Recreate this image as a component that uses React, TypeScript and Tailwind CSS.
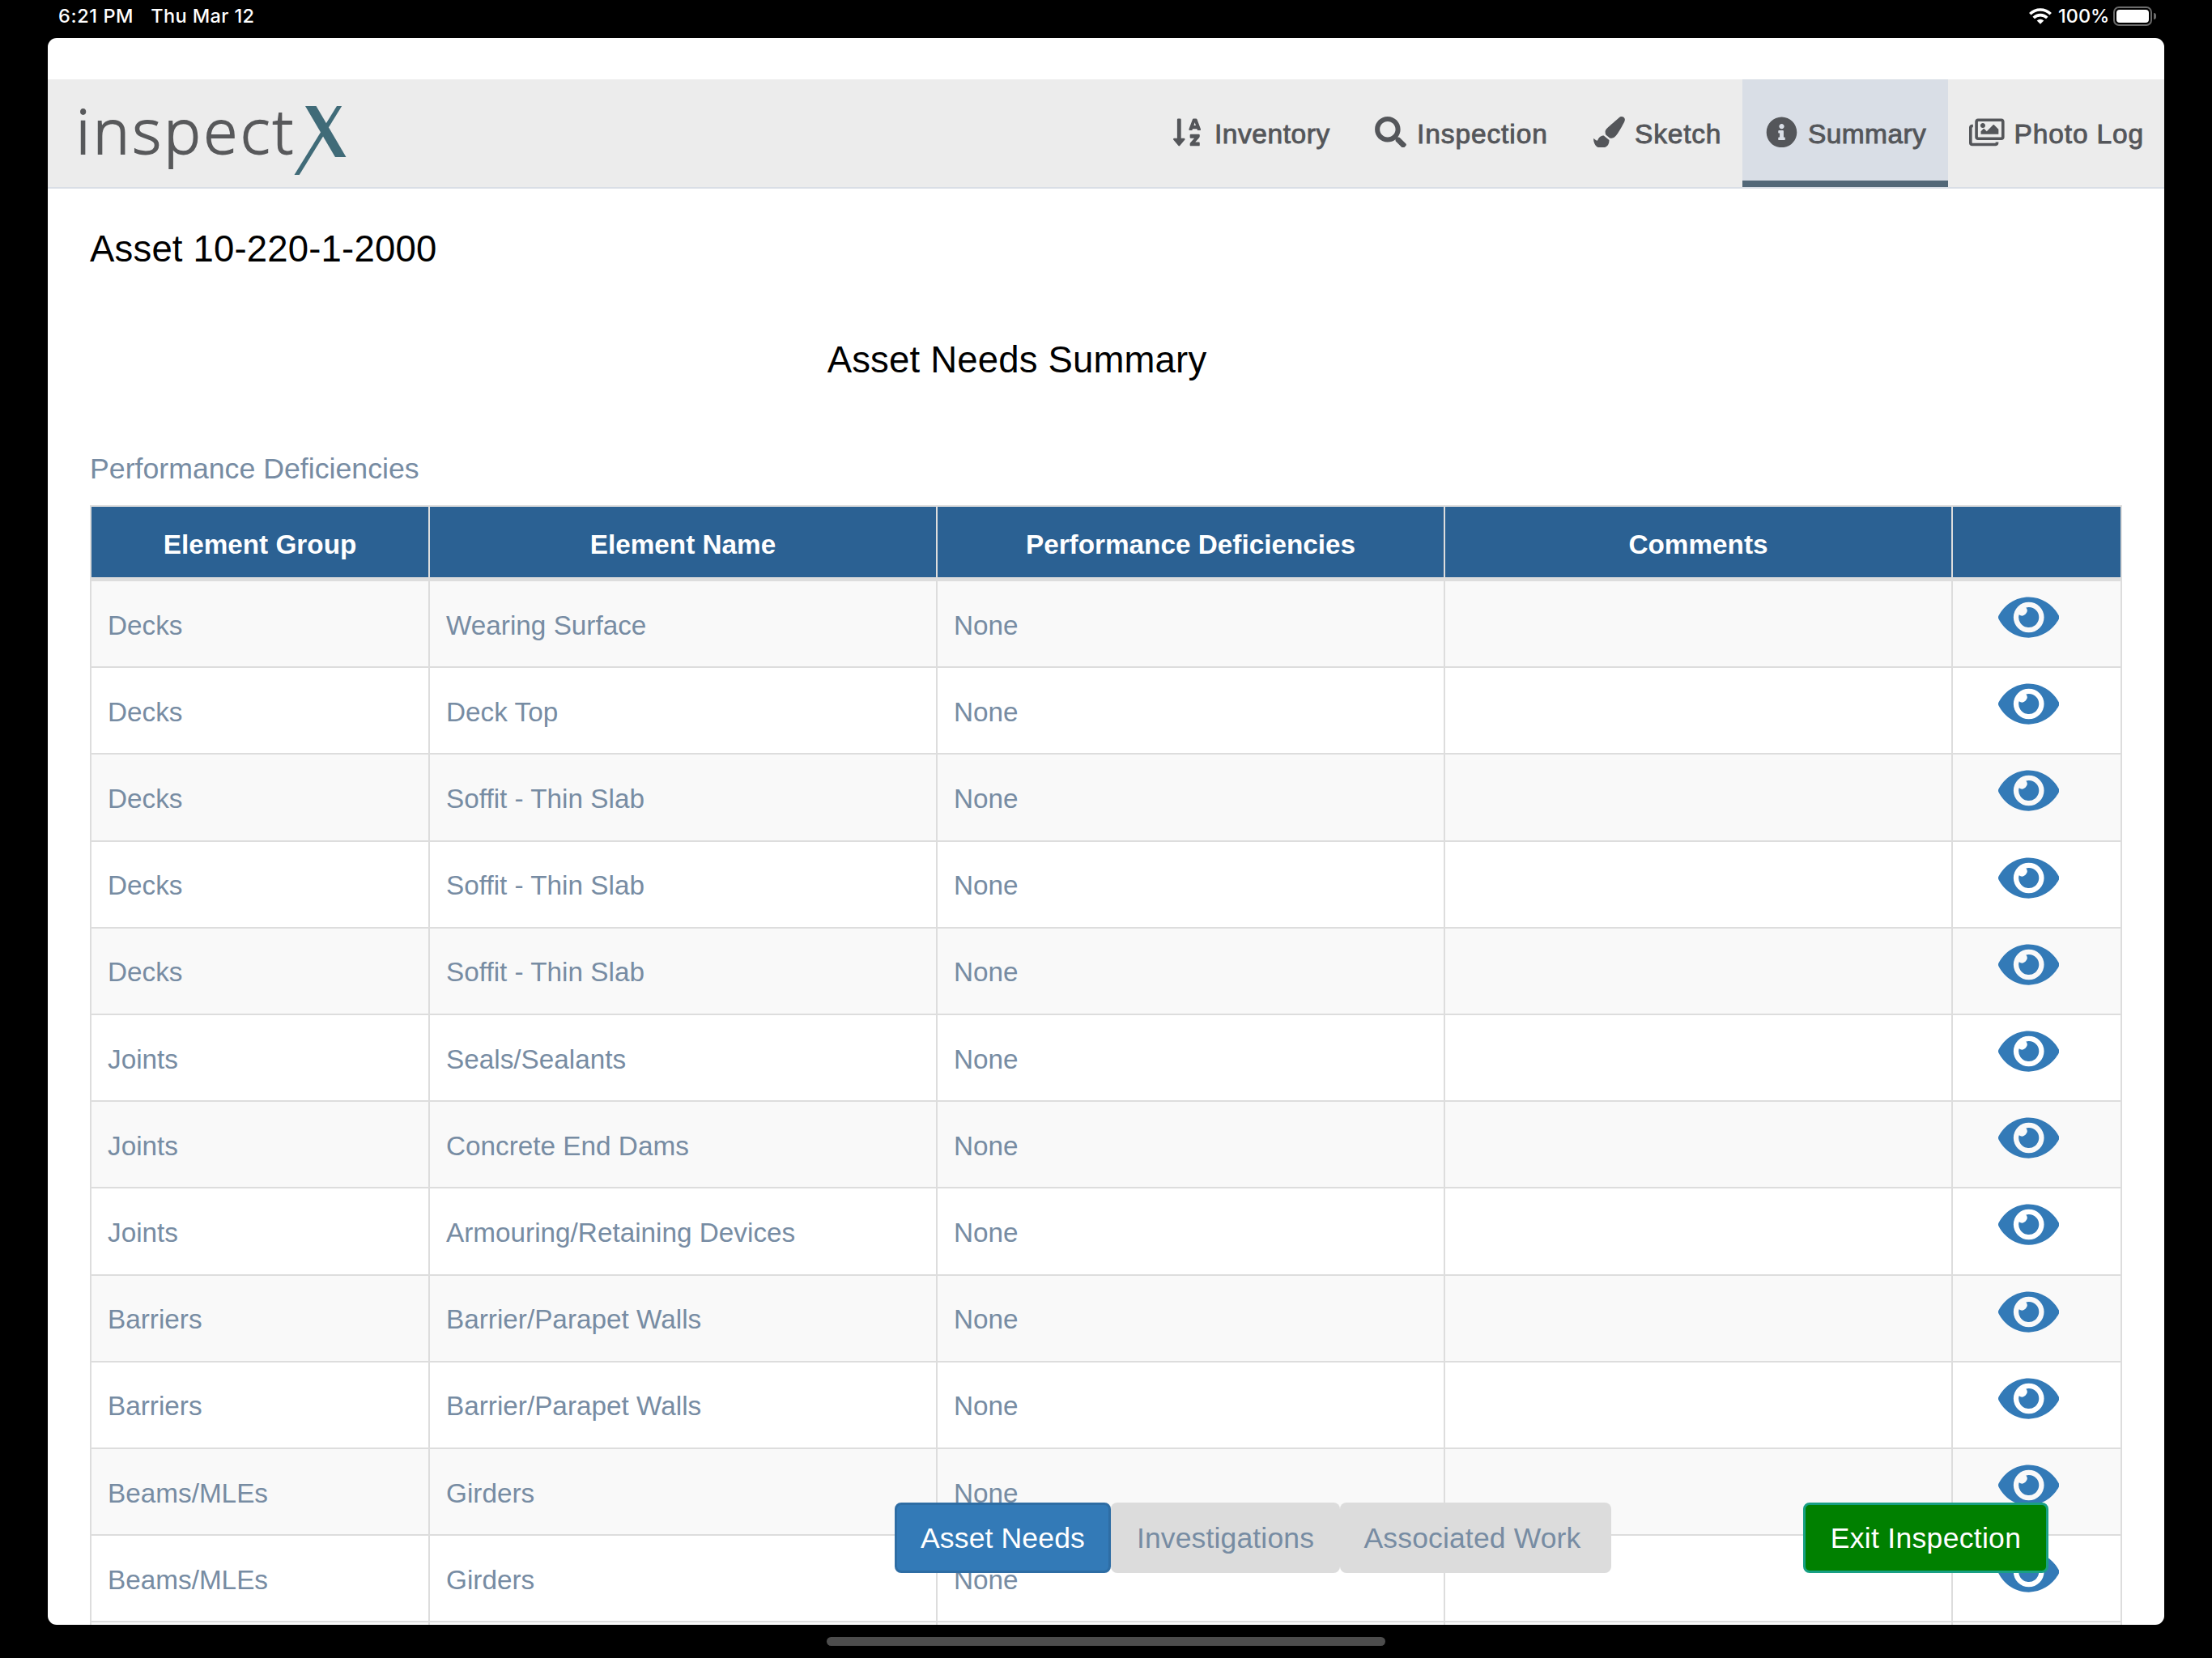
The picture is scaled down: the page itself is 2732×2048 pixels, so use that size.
import { FaEye, FaInfoCircle, FaPaintBrush, FaRegImages, FaSearch, FaSortAlphaDown } from "react-icons/fa";

const navItems = [
  { label: "Inventory", icon: FaSortAlphaDown, size: "w-[34px]", box: "w-[250px] pl-[30px]", gap: "ml-[17px]", text: "tracking-[0.55px]" },
  { label: "Inspection", icon: FaSearch, size: "w-[39px]", box: "w-[299px] pl-[29px]", gap: "ml-[13px]", text: "tracking-[0.9px]" },
  { label: "Sketch", icon: FaPaintBrush, size: "w-[39px]", box: "w-[184px] pl-0", gap: "ml-[12px]", text: "tracking-[0.8px]" },
  { label: "Summary", icon: FaInfoCircle, size: "w-[39px]", box: "w-[254px] pl-[29px]", gap: "ml-[13px]", text: "tracking-[0.4px]", active: true },
  { label: "Photo Log", icon: FaRegImages, size: "w-[43.6px]", box: "w-[267px] pl-[26px]", gap: "ml-[12px]", text: "tracking-[0.85px]" },
];

const headers = ["Element Group", "Element Name", "Performance Deficiencies", "Comments", ""];

const rows = [
  ["Decks", "Wearing Surface"],
  ["Decks", "Deck Top"],
  ["Decks", "Soffit - Thin Slab"],
  ["Decks", "Soffit - Thin Slab"],
  ["Decks", "Soffit - Thin Slab"],
  ["Joints", "Seals/Sealants"],
  ["Joints", "Concrete End Dams"],
  ["Joints", "Armouring/Retaining Devices"],
  ["Barriers", "Barrier/Parapet Walls"],
  ["Barriers", "Barrier/Parapet Walls"],
  ["Beams/MLEs", "Girders"],
  ["Beams/MLEs", "Girders"],
];

const StatusBar = () => (
  <div className="h-[47px] shrink-0 flex justify-between pl-[72px] pr-[69px] text-white font-['Inter',sans-serif] font-medium text-[23.5px] leading-[40px]">
    <div className="flex gap-[21px]">
      <span className="tracking-[0.6px]">6:21 PM</span>
      <span className="tracking-[0.4px]">Thu Mar 12</span>
    </div>
    <div className="flex items-center h-[40px]">
      <svg width="28" height="20" viewBox="0 0 28 20" fill="none" stroke="white" strokeWidth="3.6">
        <path d="M1.3 7.2a18 18 0 0 1 25.4 0" />
        <path d="M5.7 12a11.8 11.8 0 0 1 16.6 0" />
        <path d="M14 19.8l-4.3-4.4a6.2 6.2 0 0 1 8.6 0z" fill="white" stroke="none" />
      </svg>
      <span className="ml-[8px] w-[64px]">100%</span>
      <div className="ml-[4px] w-[48px] h-[24px] rounded-[7px] border-2 border-[#6b6b6b] p-[2px]">
        <div className="h-full rounded-[4px] bg-white" />
      </div>
      <div className="ml-[2px] w-[3px] h-[8px] rounded-r-full bg-[#6b6b6b]" />
    </div>
  </div>
);

const Logo = () => (
  <div className="flex pl-[35px]">
    <span className="w-[266px] text-[76px] leading-[125px] font-light tracking-[3.7px] text-[#58595b] [-webkit-text-stroke:1.8px_#58595b] font-['Open_Sans','Noto_Sans',sans-serif]">
      inspect
    </span>
    <svg className="mt-[33px]" width="68" height="86" viewBox="0 0 68 86" fill="#406b78">
      <rect x="17" y="0" width="13.5" height="63" transform="skewX(30.4)" />
      <rect x="56" y="0" width="6.2" height="85" transform="skewX(-31.7)" />
    </svg>
  </div>
);

const NavBar = () => (
  <nav className="h-[135px] shrink-0 mt-[51px] flex justify-between bg-[#ececec] border-b-2 border-[#d9dee6]">
    <Logo />
    <div className="flex">
      {navItems.map(({ label, icon: Icon, size, box, gap, text, active }) => (
        <div
          key={label}
          className={`${box} flex items-center shrink-0 h-[133px] text-[33.5px] text-[#54565a] whitespace-nowrap ${
            active ? "bg-[#d9dee6] border-b-8 border-[#536878] pt-[8px]" : ""
          }`}
        >
          <Icon className={`${size} h-[38.8px] shrink-0 -mt-[3px]`} />
          <span className={`${gap} ${text} pt-[3px] [-webkit-text-stroke:0.9px_#54565a]`}>{label}</span>
        </div>
      ))}
    </div>
  </nav>
);

const rowGrid = "grid grid-cols-[418px_627px_627px_627px_209px]";

const NeedsTable = () => (
  <div className="w-[2510px] shrink-0 border-l-2 border-t-2 border-[#dddddd]">
    <div className={`${rowGrid} h-[92px] border-b-[5px] border-[#dddddd] bg-[#2b6193]`}>
      {headers.map((header, i) => (
        <div key={i} className="border-r-2 border-[#dddddd] pt-[6px] flex items-center justify-center text-white font-bold text-[33.3px]">
          {header}
        </div>
      ))}
    </div>
    {rows.map(([group, name], i) => (
      <div key={i} className={`${rowGrid} h-[107.2px] border-b-2 border-[#dddddd] ${i % 2 === 0 ? "bg-[#f9f9f9]" : "bg-white"}`}>
        {[group, name, "None", ""].map((text, j) => (
          <div key={j} className="border-r-2 border-[#dddddd] pl-[20px] pt-[4px] flex items-center text-[33.3px]">
            {text}
          </div>
        ))}
        <div className="border-r-2 border-[#dddddd] pl-[56px] pt-[11px]">
          <FaEye className="w-[75.4px] h-[67px] text-[#337ab7]" />
        </div>
      </div>
    ))}
    <div className={`${rowGrid} h-[107px] bg-[#f9f9f9]`}>
      {headers.map((header) => (
        <div key={header} className="border-r-2 border-[#dddddd]" />
      ))}
    </div>
  </div>
);

const BottomButtons = () => (
  <>
    <div className="absolute left-[1046px] top-[1809px] flex h-[87px] text-[35.5px] tracking-[0.15px]">
      <button className="w-[267px] pt-[3px] rounded-[8px] border-[3px] border-[#2e6da4] bg-[#337ab7] text-white">Asset Needs</button>
      <button className="w-[283px] pt-[3px] rounded-[8px] bg-[#dcdcdc]">Investigations</button>
      <button className="w-[335px] pt-[3px] pr-[8px] rounded-[8px] bg-[#dcdcdc]">Associated Work</button>
    </div>
    <button className="absolute left-[2168px] top-[1809px] w-[303px] h-[87px] pt-[3px] rounded-[8px] border-[3px] border-[#18a084] bg-[#008000] text-white text-[35.5px] tracking-[0.3px]">
      Exit Inspection
    </button>
  </>
);

const App = () => {
  return (
    <div className="w-[2732px] h-[2048px] overflow-hidden bg-black flex flex-col font-['Liberation_Sans',Arial,sans-serif]">
      <StatusBar />
      <main className="relative ml-[59px] w-[2614px] h-[1960px] shrink-0 rounded-[11px] overflow-hidden bg-white flex flex-col text-[#778ca3]">
        <NavBar />
        <div className="pl-[52px] flex flex-col">
          <h1 className="mt-[45px] text-[45.5px] leading-[60px] tracking-[0.18px] text-black">Asset 10-220-1-2000</h1>
          <h2 className="mt-[77px] w-[2290px] text-center text-[45.5px] leading-[60px] tracking-[0.18px] text-black">Asset Needs Summary</h2>
          <h3 className="mt-[79px] mb-[20px] text-[35.7px] leading-[50px]">Performance Deficiencies</h3>
          <NeedsTable />
        </div>
        <BottomButtons />
      </main>
      <div className="mt-[15px] ml-[1021px] w-[690px] h-[11px] shrink-0 rounded-full bg-[#4d4d4d]" />
    </div>
  );
};

export default App;
